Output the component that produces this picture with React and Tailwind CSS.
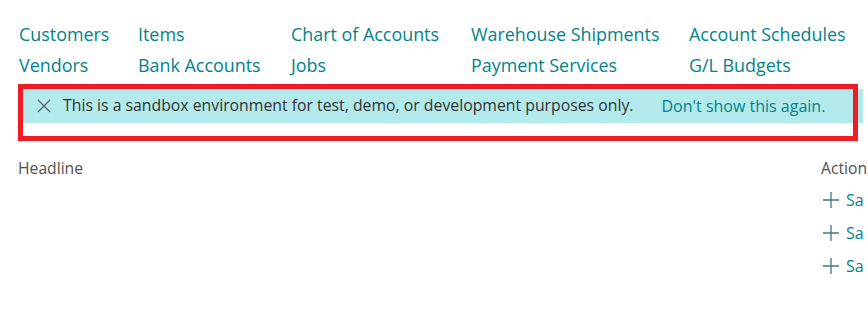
import React from "react";

const columns = [
  { width: "w-[119px]", links: ["Customers", "Vendors"] },
  { width: "w-[153px]", links: ["Items", "Bank Accounts"] },
  { width: "w-[180px]", links: ["Chart of Accounts", "Jobs"] },
  { width: "w-[218px]", links: ["Warehouse Shipments", "Payment Services"] },
  { width: "w-[170px]", links: ["Account Schedules", "G/L Budgets"] },
];

const PlusIcon = () => (
  <svg width="18" height="18" viewBox="0 0 18 18" className="shrink-0">
    <path d="M9 1v16M1 9h16" stroke="#4b7478" strokeWidth="1.3" fill="none" />
  </svg>
);

export default function App() {
  return (
    <div
      className="relative w-[868px] h-[326px] overflow-hidden bg-white"
      style={{ fontFamily: '"Open Sans", "Noto Sans", sans-serif' }}
    >
      {/* Navigation links */}
      <div className="flex pl-[19px] pt-[19px]">
        {columns.map((col) => (
          <div key={col.links[0]} className={`${col.width} shrink-0 flex flex-col`}>
            {col.links.map((link) => (
              <a
                key={link}
                className="text-[17.9px] leading-[31px] text-[#00838d] whitespace-nowrap cursor-pointer"
              >
                {link}
              </a>
            ))}
          </div>
        ))}
      </div>

      {/* Sandbox banner */}
      <div className="mt-[8px] ml-[23px] w-[840px] h-[34px] bg-[#b2e9eb] flex items-center">
        <svg width="14" height="14" viewBox="0 0 14 14" className="ml-[14px] mr-[12px] shrink-0">
          <path d="M1 1l12 12M13 1L1 13" stroke="#55656a" strokeWidth="1.3" fill="none" />
        </svg>
        <span className="text-[15.8px] text-[#333] whitespace-nowrap">
          This is a sandbox environment for test, demo, or development purposes only.
        </span>
        <a className="ml-[28px] text-[16px] text-[#00838d] whitespace-nowrap cursor-pointer">
          Don't show this again.
        </a>
      </div>

      {/* Red highlight box drawn over the banner */}
      <div className="absolute left-[18px] top-[84px] w-[840px] h-[57px] border-[5px] border-[#ee1c25] pointer-events-none" />

      {/* Lower section */}
      <div className="flex justify-between mt-[34px] pl-[18px]">
        <div className="text-[15.7px] text-[#505050]">Headline</div>
        <div className="w-[47px] overflow-hidden flex flex-col shrink-0">
          <div className="text-[15.7px] text-[#505050] whitespace-nowrap">Action</div>
          <div className="flex flex-col gap-[12px] mt-[9px]">
            {[0, 1, 2].map((i) => (
              <div key={i} className="flex items-center gap-[6px] h-[21px] pl-[1px]">
                <PlusIcon />
                <span className="text-[16px] text-[#00838d] whitespace-nowrap">Sa</span>
              </div>
            ))}
          </div>
        </div>
      </div>
    </div>
  );
}
